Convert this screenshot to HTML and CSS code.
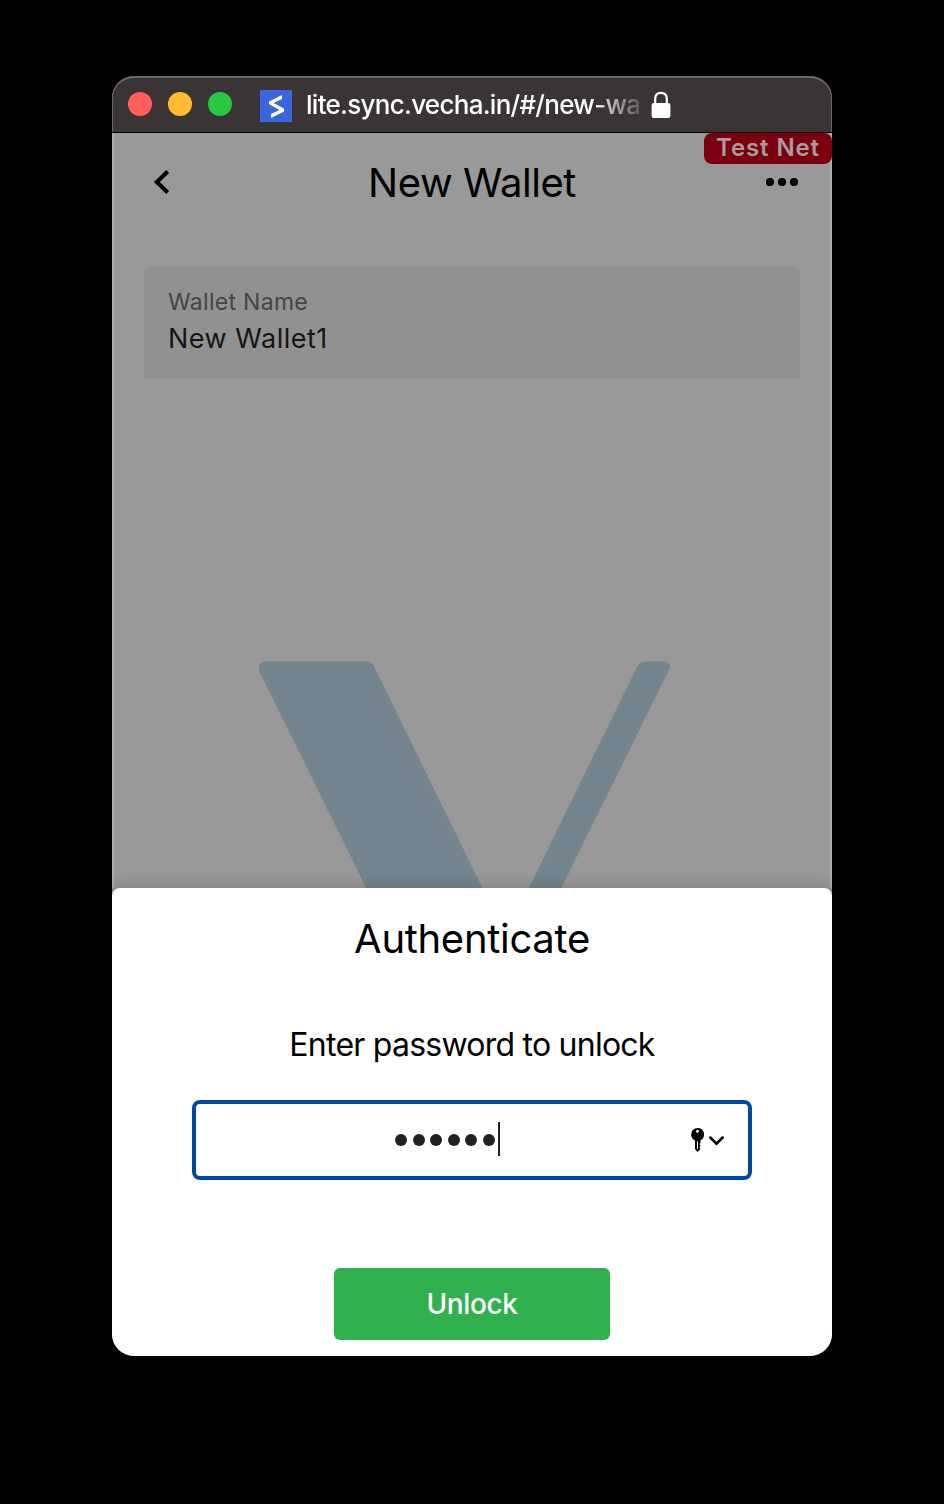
FILE: index.html
```html
<!DOCTYPE html>
<html lang="en">
<head>
<meta charset="utf-8">
<title>New Wallet</title>
<link rel="stylesheet" href="styles.css">
</head>
<body>
<div class="window">
  <header class="titlebar">
    <span class="light light-red"></span>
    <span class="light light-yellow"></span>
    <span class="light light-green"></span>
    <svg class="favicon" viewBox="0 0 32 32"><rect width="32" height="32" fill="#3a65dc"/><path d="M22 5V9L13.500 13L24 18.500V21.500L11 28V24L19.500 20L9 14V11.500Z" fill="#fff"/></svg>
    <span class="url">lite.sync.vecha.in/#/new-wa</span>
    <svg class="lock" viewBox="0 0 20 28"><path d="M4.200 13V8Q4.200 1.800 10 1.800T15.800 8V13" fill="none" stroke="#fff" stroke-width="2.200"/><rect x=".6" y="12" width="18.800" height="15" rx="2.200" fill="#fff"/></svg>
  </header>
  <main class="page">
    <span class="badge">Test Net</span>
    <div class="toolbar">
      <svg class="back" viewBox="0 0 18 26"><path d="M15.700 2.500L4.800 13L15.700 23.500" fill="none" stroke="#000" stroke-width="4"/></svg>
      <h1 class="title">New Wallet</h1>
      <svg class="more" viewBox="0 0 34 10"><circle cx="4" cy="5" r="4.100"/><circle cx="16" cy="5" r="4.100"/><circle cx="28" cy="5" r="4.100"/></svg>
    </div>
    <div class="field">
      <span class="field-label">Wallet Name</span>
      <span class="field-value">New Wallet1</span>
    </div>
    <svg class="watermark" viewBox="0 0 414 228"><path d="M7 .5H109Q114 .5 116.500 5L229 235H112.500L2 11Q-1 2 7 .5ZM388 .5H407.500Q415 1.500 413 8L301 235H268.500L380.500 6Q383.500 .5 388 .5Z" fill="#73858f"/></svg>
  </main>
  <section class="sheet">
    <h2 class="sheet-title">Authenticate</h2>
    <p class="prompt">Enter password to unlock</p>
    <div class="password">
      <div class="dots"><i></i><i></i><i></i><i></i><i></i><i></i></div>
      <span class="caret"></span>
      <svg class="key" viewBox="0 0 34 26"><path d="M7.500 1A6.500 6.500 0 0 0 5 13.400V22L7.500 25L10.500 22L9.500 20.500L10.500 19L9.500 17L10.500 15.500V13.300A6.500 6.500 0 0 0 7.500 1Z"/><circle cx="7.500" cy="4.300" r="1.500" fill="#fff"/><path d="M7.500 14.500V22" stroke="#fff" stroke-width="1"/><path d="M20.300 10.500L26.500 16.700L32.700 10.500" fill="none" stroke="#000" stroke-width="2.500" stroke-linecap="round"/></svg>
    </div>
    <button class="unlock">Unlock</button>
  </section>
</div>
</body>
</html>
```

FILE: styles.css
```css
* { box-sizing: border-box; }
body {
  margin: 0;
  height: 1504px;
  padding: 76px 112px;
  background: #000;
  font-family: Inter, "Liberation Sans", sans-serif;
}
.window {
  position: relative;
  width: 720px;
  height: 1280px;
  border-radius: 22px;
  overflow: hidden;
  display: flex;
  flex-direction: column;
  background: #999;
}
.titlebar {
  flex: none;
  height: 57px;
  padding: 0 16px;
  display: flex;
  align-items: center;
  background: #3a3534;
  border-bottom: 1px solid #000;
  border-radius: 22px 22px 0 0;
  box-shadow: inset 0 2px 0 #6a6766, inset 1px 0 0 #6a6766, inset -1px 0 0 #6a6766;
}
.light { width: 24px; height: 24px; border-radius: 50%; margin-right: 16px; }
.light-red { background: #ff5f57; }
.light-yellow { background: #febc2e; }
.light-green { background: #28c840; margin-right: 28px; }
.favicon { width: 32px; height: 32px; margin: 4px 14px 0 0; }
.url {
  width: 333px;
  white-space: nowrap;
  color: #fff;
  font-size: 26px;
  font-weight: 500;
  letter-spacing: -0.72px;
  -webkit-mask-image: linear-gradient(90deg, #000 285px, transparent 345px);
  mask-image: linear-gradient(90deg, #000 285px, transparent 345px);
}
.lock { width: 20px; height: 28px; margin: 2px 0 0 12px; }
.page {
  flex: none;
  height: 755px;
  display: flex;
  flex-direction: column;
  box-shadow: inset 2px 0 0 #acacac, inset -2px 0 0 #acacac;
  background: #999;
}
.badge {
  position: absolute;
  top: 57px;
  right: 0;
  width: 128px;
  height: 31px;
  border-radius: 8px;
  background: #7a0010;
  color: #a99a9c;
  font-size: 24px;
  font-weight: 600;
  line-height: 29px;
  letter-spacing: .9px;
  text-align: center;
}
.toolbar {
  height: 98px;
  padding: 0 32px 0 40px;
  display: grid;
  grid-template-columns: 34px 1fr 34px;
  align-items: center;
}
.back { width: 18px; height: 26px; }
.title, .sheet-title { margin: 0; font-size: 40px; font-weight: 400; text-align: center; }
.title { padding: 2px 8px 0 0; letter-spacing: -.45px; }
.more { width: 34px; height: 10px; }
.field {
  height: 112px;
  margin: 35px 32px 0;
  padding: 22px 24px;
  border-radius: 8px 8px 0 0;
  background: #919191;
  display: flex;
  flex-direction: column;
}
.field-label { font-size: 23px; line-height: 28px; color: #444; letter-spacing: .3px; }
.field-value { font-size: 27px; line-height: 36px; margin-top: 5px; color: #151515; letter-spacing: .5px; }
.watermark { width: 414px; height: 228px; margin: 283px 0 0 145px; }
.sheet {
  position: relative;
  flex: 1;
  border-radius: 8px 8px 0 0;
  background: #fff;
  box-shadow: 0 -2px 16px rgba(0, 0, 0, .16);
  display: flex;
  flex-direction: column;
  align-items: center;
}
.sheet-title { margin-top: 27px; line-height: 48px; letter-spacing: -.3px; }
.prompt { margin: 63px 0 0; font-size: 32px; line-height: 38px; letter-spacing: -.76px; }
.password {
  width: 560px;
  height: 80px;
  margin-top: 36px;
  padding: 0 24px 0 199px;
  border: 4px solid #0048a8;
  border-radius: 8px;
  display: flex;
  align-items: center;
}
.dots { display: flex; gap: 5.600px; }
.dots i { width: 12px; height: 12px; border-radius: 50%; background: #212121; }
.caret { width: 2px; height: 34px; margin: -2px 0 0 3px; background: #212121; }
.key { width: 34px; height: 26px; margin-left: auto; }
.unlock {
  width: 276px;
  height: 72px;
  margin-top: 88px;
  border: 0;
  border-radius: 6px;
  background: #30b14e;
  color: #fff;
  font: 500 28px Inter, "Liberation Sans", sans-serif;
  letter-spacing: -.4px;
}
```
